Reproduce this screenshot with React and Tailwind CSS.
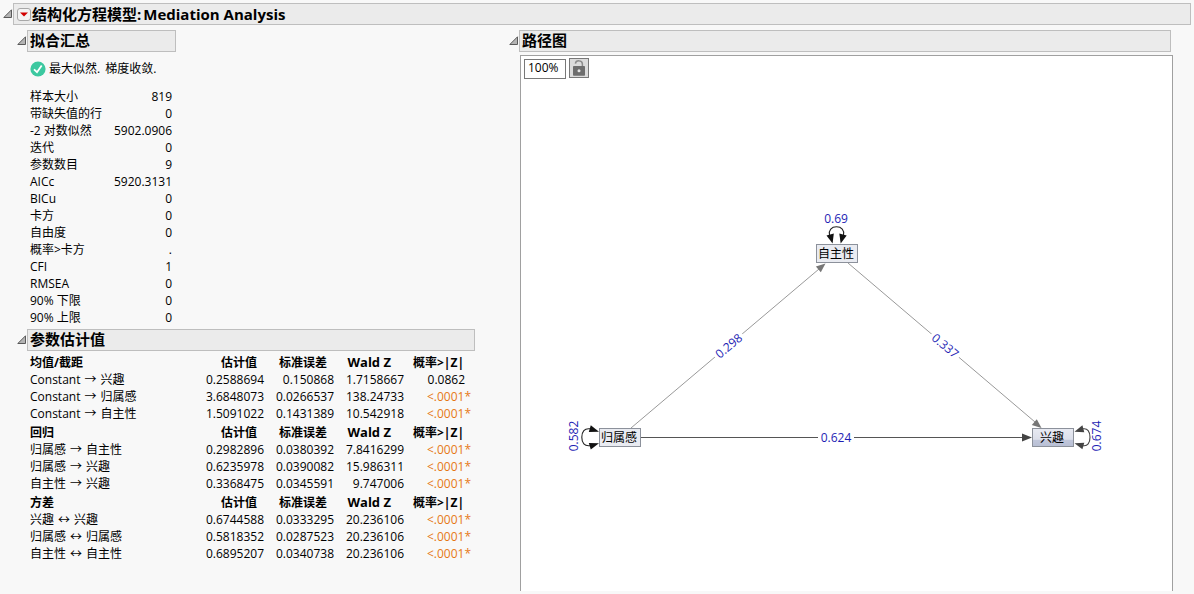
const FIT_ROWS = [
  ['样本大小', '819'],
  ['带缺失值的行', '0'],
  ['-2 对数似然', '5902.0906'],
  ['迭代', '0'],
  ['参数数目', '9'],
  ['AICc', '5920.3131'],
  ['BICu', '0'],
  ['卡方', '0'],
  ['自由度', '0'],
  ['概率>卡方', '.'],
  ['CFI', '1'],
  ['RMSEA', '0'],
  ['90% 下限', '0'],
  ['90% 上限', '0'],
];

const ESTIMATES = [
  {
    title: '均值/截距',
    rows: [
      [['Constant', '→', '兴趣'], '0.2588694', '0.150868', '1.7158667', '0.0862'],
      [['Constant', '→', '归属感'], '3.6848073', '0.0266537', '138.24733', '<.0001*'],
      [['Constant', '→', '自主性'], '1.5091022', '0.1431389', '10.542918', '<.0001*'],
    ],
  },
  {
    title: '回归',
    rows: [
      [['归属感', '→', '自主性'], '0.2982896', '0.0380392', '7.8416299', '<.0001*'],
      [['归属感', '→', '兴趣'], '0.6235978', '0.0390082', '15.986311', '<.0001*'],
      [['自主性', '→', '兴趣'], '0.3368475', '0.0345591', '9.747006', '<.0001*'],
    ],
  },
  {
    title: '方差',
    rows: [
      [['兴趣', '↔', '兴趣'], '0.6744588', '0.0333295', '20.236106', '<.0001*'],
      [['归属感', '↔', '归属感'], '0.5818352', '0.0287523', '20.236106', '<.0001*'],
      [['自主性', '↔', '自主性'], '0.6895207', '0.0340738', '20.236106', '<.0001*'],
    ],
  },
];

function Disclosure({ label }) {
  return (
    <button type="button" aria-label={label} className="flex h-[22px] w-[10px] shrink-0 items-center">
      <svg width="10" height="10" viewBox="0 0 10 10" aria-hidden="true">
        <path d="M0.8 8.5 H8.5 V0.8 Z" fill="#b4b4b4" stroke="#5a5a5a" strokeWidth="1" />
      </svg>
    </button>
  );
}

function Bar({ label, width, children }) {
  return (
    <div className={`flex ${width}`}>
      <Disclosure label={label} />
      <h2 className="flex h-[22px] min-w-0 flex-1 items-center border border-[#bebebe] bg-[#ebebeb] pb-[2px] pl-[2px] text-[15px] leading-[18px] font-bold whitespace-nowrap">
        {children}
      </h2>
    </div>
  );
}

function FitSummary() {
  return (
    <section>
      <Bar label="折叠拟合汇总" width="w-[159px]">拟合汇总</Bar>
      <p className="mt-[7px] flex h-5 items-center gap-[3px] pl-[13px]">
        <svg width="16" height="16" viewBox="0 0 16 16" aria-hidden="true" className="shrink-0">
          <circle cx="8" cy="8" r="7.6" fill="#3cc8a0" />
          <path d="M4 8.3 L7 11.2 L11.7 4.6" fill="none" stroke="#fff" strokeWidth="1.8" />
        </svg>
        <span className="flex gap-[5px] pb-[2px]">
          <span>最大似然.</span>
          <span>梯度收敛.</span>
        </span>
      </p>
      <table className="mt-[9px] ml-[13px] w-[142px]">
        <tbody>
          {FIT_ROWS.map(([name, value]) => (
            <tr key={name} className="h-[17px]">
              <th scope="row" className="p-0 text-left font-normal whitespace-nowrap">{name}</th>
              <td className="p-0 text-right">{value}</td>
            </tr>
          ))}
        </tbody>
      </table>
    </section>
  );
}

function Estimates() {
  return (
    <section className="mt-[3px]">
      <Bar label="折叠参数估计值" width="w-[458px]">参数估计值</Bar>
      <table className="mt-[1px] ml-[13px] w-[441px] table-fixed">
        <colgroup>
          <col className="w-[166px]" />
          <col className="w-[68px]" />
          <col className="w-[70px]" />
          <col className="w-[70px]" />
          <col className="w-[67px]" />
        </colgroup>
        {ESTIMATES.map((group) => (
          <tbody key={group.title}>
            <tr className="h-[19px] whitespace-nowrap">
              <th scope="col" className="p-0 pt-[2px] text-left">{group.title}</th>
              <th scope="col" className="p-0 pt-[2px] pr-[7px] text-right">估计值</th>
              <th scope="col" className="p-0 pt-[2px] pr-[7px] text-right">标准误差</th>
              <th scope="col" className="p-0 pt-[2px] pr-[13px] text-right text-[13px]">Wald Z</th>
              <th scope="col" className="p-0 pt-[2px] pr-[7px] text-right">概率&gt;|Z|</th>
            </tr>
            {group.rows.map(([name, est, se, z, p]) => (
              <tr key={name.join(' ')} className="h-[17px] whitespace-nowrap">
                <th scope="row" className="p-0 text-left font-normal">
                  <span className="flex gap-1">
                    {name.map((part, i) => (
                      <span key={i}>{part}</span>
                    ))}
                  </span>
                </th>
                <td className="p-0 text-right">{est}</td>
                <td className="p-0 text-right">{se}</td>
                <td className="p-0 text-right">{z}</td>
                <td className={p.endsWith('*') ? 'p-0 text-right text-[#e67817]' : 'p-0 pr-[6px] text-right'}>{p}</td>
              </tr>
            ))}
          </tbody>
        ))}
      </table>
    </section>
  );
}

function Node({ x, y, fill, children }) {
  return (
    <g>
      <rect x={x + 0.5} y={y + 0.5} width="41" height="18" fill={fill} stroke="#8c919b" />
      <text x={x + 20} y={y + 14} textAnchor="middle" fill="#000">{children}</text>
    </g>
  );
}

function EdgeLabel({ x, y, angle = 0, children }) {
  return (
    <g transform={`translate(${x} ${y}) rotate(${angle})`}>
      <rect x="-18" y="-8" width="36" height="16" fill="#fff" />
      <text y="4" textAnchor="middle" fill="#1e1eb4">{children}</text>
    </g>
  );
}

function Diagram() {
  return (
    <svg width="651" height="511" viewBox="521 80 651 511" role="img" aria-label="路径图" className="block max-w-full text-[12px]">
      <defs>
        <linearGradient id="selected" x1="0" y1="0" x2="0" y2="1">
          <stop offset="0" stopColor="#e8eaf2" />
          <stop offset="0.6" stopColor="#dcdfea" />
          <stop offset="0.66" stopColor="#c0c6da" />
          <stop offset="1" stopColor="#b8bfd4" />
        </linearGradient>
      </defs>

      <g stroke="#999" fill="#777">
        <path d="M631 428 L819 269" />
        <path d="M825.5 263.5 L820.8 272.3 L815.9 266.5 Z" stroke="none" />
        <path d="M848 263 L1035 422" />
        <path d="M1041.5 428 L1031.8 425 L1036.8 419.2 Z" stroke="none" />
      </g>
      <path d="M641 437.5 H1024" stroke="#555" />
      <path d="M1032 437.5 L1022 433.5 V441.5 Z" fill="#444" />

      <EdgeLabel x={729} y={346} angle={-40}>0.298</EdgeLabel>
      <EdgeLabel x={945} y={346} angle={40}>0.337</EdgeLabel>
      <EdgeLabel x={836} y={438}>0.624</EdgeLabel>

      <g fill="none" stroke="#222" strokeWidth="1.1">
        <path d="M829.5 235 C828.5 230 831.5 226.8 836.5 226.8 C841.5 226.8 844.5 230 843.5 235" />
        <path d="M590 428.8 C584.5 428 581.8 431.5 581.8 437.3 C581.8 443 584.5 446.5 590 445.7" />
        <path d="M1083 428.8 C1087.5 428 1090 431.5 1090 437.3 C1090 443 1087.5 446.5 1083 445.7" stroke="#444" />
      </g>
      <g fill="#111">
        <path d="M832.6 243.5 L826.5 235.5 L833.8 233.6 Z" />
        <path d="M840.7 243.5 L839.3 233.6 L846.7 235.5 Z" />
        <path d="M599 431.7 L588.8 431.9 L590.8 425.2 Z" />
        <path d="M599 443.3 L588.8 442.9 L590.8 449.4 Z" />
      </g>
      <g fill="#444">
        <path d="M1074.5 431.7 L1084.3 432.2 L1082.4 425.2 Z" />
        <path d="M1074.5 443.3 L1084.3 442.8 L1082.4 449.2 Z" />
      </g>

      <text x="836" y="223" textAnchor="middle" fill="#1e1eb4">0.69</text>
      <text transform="translate(578 436) rotate(-90)" textAnchor="middle" fill="#1e1eb4">0.582</text>
      <text transform="translate(1101 436) rotate(-90)" textAnchor="middle" fill="#1e1eb4">0.674</text>

      <Node x={816} y={244} fill="#e9ebf1">自主性</Node>
      <Node x={599} y={428} fill="#e9ebf1">归属感</Node>
      <Node x={1032} y={428} fill="url(#selected)">兴趣</Node>
    </svg>
  );
}

function PathDiagram() {
  return (
    <section className="min-w-0 flex-1">
      <div className="mr-[2px]">
        <Bar label="折叠路径图" width="w-full">路径图</Bar>
      </div>
      <div className="mt-[3px] ml-[11px] border border-b-0 border-[#a0a0a0] bg-white">
        <div className="flex h-6 items-start gap-[3px] pt-[2px] pl-[3px]">
          <input
            type="text"
            aria-label="缩放"
            defaultValue="100%"
            className="mt-[1px] h-5 w-[42px] border border-[#787878] bg-white pb-[4px] pl-[3px] leading-[14px] outline-none"
          />
          <button type="button" aria-label="锁定" className="flex h-[20px] w-[20px] items-center justify-center border border-[#787878] bg-[#dcdcdc]">
            <svg width="18" height="18" viewBox="0 0 18 18" aria-hidden="true">
              <path d="M5.4 4.6 C5.8 0.9 12.4 0.9 12.4 5 V8" fill="none" stroke="#8c8c8c" strokeWidth="1.5" />
              <rect x="3" y="7" width="12" height="9.8" rx="0.8" fill="#6e6e6e" />
              <circle cx="9" cy="11.8" r="1.5" fill="#e6e6e6" />
            </svg>
          </button>
        </div>
        <Diagram />
      </div>
    </section>
  );
}

export default function App() {
  return (
    <main className="min-h-screen bg-[#f8f8f8] pt-[3px] pr-[3px] pl-[3px] font-['Open_Sans','Noto_Sans_CJK_SC',sans-serif] text-[12px] leading-[17px] text-black">
      <div className="flex">
        <Disclosure label="折叠报表" />
        <h1 className="flex h-[22px] min-w-0 flex-1 items-center border border-[#bebebe] bg-[#ebebeb] pl-[3px] text-[15px] leading-5 font-bold whitespace-nowrap">
          <button type="button" aria-label="菜单" className="flex h-[13px] w-[14px] items-center justify-center rounded-[3px] border border-[#a8a8a8] bg-[#f4f4f4]">
            <svg width="8" height="5" viewBox="0 0 8 5" aria-hidden="true">
              <path d="M0 0.5 H8 L4 4.5 Z" fill="#d20000" />
            </svg>
          </button>
          <span className="ml-[1px]">结构化方程模型:</span>
          <span className="ml-[2px]">Mediation Analysis</span>
        </h1>
      </div>
      <div className="mt-[5px] flex pr-[18px] pl-[14px]">
        <div className="w-[492px] shrink-0">
          <FitSummary />
          <Estimates />
        </div>
        <PathDiagram />
      </div>
    </main>
  );
}
